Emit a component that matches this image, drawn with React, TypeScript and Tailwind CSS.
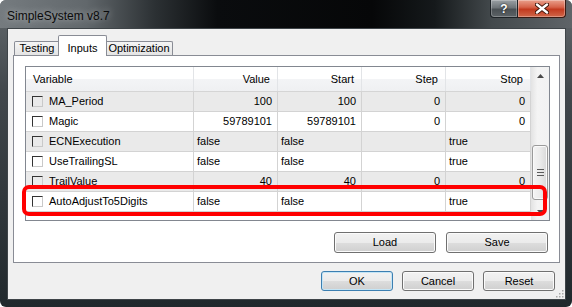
import React from 'react'

const rows = [
  { name: 'MA_Period', cells: ['100', '100', '0', '0'] },
  { name: 'Magic', cells: ['59789101', '59789101', '0', '0'] },
  { name: 'ECNExecution', cells: ['false', 'false', '', 'true'] },
  { name: 'UseTrailingSL', cells: ['false', 'false', '', 'true'] },
  { name: 'TrailValue', cells: ['40', '40', '0', '0'] },
  { name: 'AutoAdjustTo5Digits', cells: ['false', 'false', '', 'true'] },
]

const colW = ['w-[84px]', 'w-[84px]', 'w-[84px]', 'w-[85px]']

const isNum = (s: string) => /^\d+$/.test(s)

function WinButton({ label, className, focused }: { label: string; className: string; focused?: boolean }) {
  return (
    <div
      className={`${className} flex items-center justify-center rounded-[3px] border ${
        focused ? 'border-[#3c7fb1] shadow-[inset_0_0_0_1px_#c4e5f6]' : 'border-[#707070] shadow-[inset_0_0_0_1px_#fbfbfb]'
      } bg-[linear-gradient(#f2f2f2_0%,#ebebeb_50%,#dddddd_51%,#cfcfcf_100%)] text-[11px] text-black`}
    >
      {label}
    </div>
  )
}

function TitleBar() {
  return (
    <div className="h-[28px] shrink-0 flex items-start justify-between pr-[6px] bg-[linear-gradient(90deg,#757b7f_0%,#62686c_15%,#2c3134_27%,#0a0c0e_38%,#060708_65%,#15191b_76%,#43494c_86%,#5f6468_100%)]">
      <div className="pl-[7px] pt-[7px] text-[12px] text-[#0b0b0b] [text-shadow:0_0_7px_rgba(255,255,255,0.6)]">
        SimpleSystem v8.7
      </div>
      <div className="flex">
        <div className="w-[28px] h-[18px] flex items-center justify-center rounded-bl-[4px] border border-t-0 border-[#1d2226] bg-[linear-gradient(#9aa0a4_0%,#6e7478_45%,#4a5054_55%,#5c6266_100%)] shadow-[inset_0_0_0_1px_rgba(255,255,255,0.25)]">
          <span className="text-white font-bold text-[12px] leading-none [text-shadow:0_0_2px_#000]">?</span>
        </div>
        <div className="w-[48px] h-[18px] flex items-center justify-center rounded-br-[4px] border border-t-0 border-l-0 border-[#3b1a12] bg-[linear-gradient(#e9a08c_0%,#d6634a_42%,#c23a1f_55%,#d0674a_100%)] shadow-[inset_0_0_0_1px_rgba(255,255,255,0.3)]">
          <svg width="14" height="11" viewBox="0 0 14 11">
            <path d="M2 1.5 L12 9.5 M12 1.5 L2 9.5" stroke="#3a1208" strokeWidth="4.2" strokeLinecap="round" />
            <path d="M2 1.5 L12 9.5 M12 1.5 L2 9.5" stroke="#ffffff" strokeWidth="2.4" strokeLinecap="round" />
          </svg>
        </div>
      </div>
    </div>
  )
}

function Scrollbar() {
  return (
    <div className="w-[18px] shrink-0 flex flex-col bg-[linear-gradient(90deg,#e3e3e3_0%,#f4f4f4_35%,#f2f2f2_100%)]">
      <div className="h-[17px] flex items-center justify-center">
        <svg width="7" height="4" viewBox="0 0 7 4">
          <path d="M3.5 0 L7 4 L0 4 Z" fill="#4a4a4a" />
        </svg>
      </div>
      <div className="mt-[61px] mx-[1px] h-[55px] rounded-[3px] border border-[#9a9a9a] bg-[linear-gradient(90deg,#f4f4f4_0%,#ebebeb_50%,#d9d9d9_100%)] shadow-[inset_0_0_0_1px_#fafafa] flex flex-col items-center justify-center gap-[2px]">
        <div className="w-[7px] h-px bg-[#5a5a5a]" />
        <div className="w-[7px] h-px bg-[#5a5a5a]" />
        <div className="w-[7px] h-px bg-[#5a5a5a]" />
      </div>
      <div className="flex-1" />
      <div className="h-[17px] flex items-center justify-center">
        <svg width="7" height="4" viewBox="0 0 7 4">
          <path d="M0 0 L7 0 L3.5 4 Z" fill="#4a4a4a" />
        </svg>
      </div>
    </div>
  )
}

function Grid() {
  return (
    <div className="ml-[11px] mt-[10px] w-[525px] h-[155px] shrink-0 border border-[#828790] bg-white flex overflow-hidden">
      <div className="flex-1 flex flex-col">
        <div className="h-[25px] shrink-0 flex border-b border-[#d5d5d5] bg-[linear-gradient(#ffffff_0%,#ffffff_48%,#f3f4f6_52%,#eff0f2_100%)]">
          <div className="w-[168px] pl-[7px] flex items-center border-r border-[#e2e4e7]">Variable</div>
          {['Value', 'Start', 'Step', 'Stop'].map((h, i) => (
            <div key={h} className={`${colW[i]} pr-[7px] flex items-center justify-end border-r border-[#e2e4e7]`}>
              {h}
            </div>
          ))}
        </div>
        {rows.map((r, ri) => (
          <div
            key={r.name}
            className={`h-[20px] shrink-0 flex border-b border-[#d3d3d3] ${ri % 2 === 0 ? 'bg-[#eaeaea]' : 'bg-white'}`}
          >
            <div className="w-[168px] pl-[6px] flex items-center gap-[6px] border-r border-[#d3d3d3]">
              <span className="w-[11px] h-[11px] shrink-0 border border-t-[#333333] border-l-[#333333] border-r-[#c9c9c9] border-b-[#c9c9c9]" />
              <span>{r.name}</span>
            </div>
            {r.cells.map((c, i) => (
              <div
                key={i}
                className={`${colW[i]} flex items-center border-r border-[#d3d3d3] ${
                  isNum(c) ? 'justify-end pr-[5px]' : 'pl-[3px]'
                }`}
              >
                {c}
              </div>
            ))}
          </div>
        ))}
      </div>
      <Scrollbar />
    </div>
  )
}

export default function App() {
  return (
    <div className="w-[572px] h-[307px] flex flex-col overflow-hidden rounded-[6px] bg-[linear-gradient(180deg,#63696d_0%,#41474b_30%,#20282c_100%)] font-['Liberation_Sans',Arial,sans-serif] text-[11px] text-black">
      <TitleBar />
      <div className="relative flex-1 ml-[7px] mr-[6px] flex flex-col border border-[#3e4448] bg-[#f0f0f0]">
        <div className="h-[26px] shrink-0 flex items-end pl-[6px]">
          <div className="w-[46px] h-[14px] flex items-center justify-center rounded-t-[2px] border border-b-0 border-[#898c95] bg-[linear-gradient(#f5f5f5,#e4e4e4)]">
            Testing
          </div>
          <div className="relative z-10 ml-[-2px] mb-[-1px] w-[49px] h-[21px] flex justify-center pt-[4px] rounded-t-[2px] border border-b-0 border-[#898c95] bg-white">
            Inputs
          </div>
          <div className="ml-[-2px] w-[68px] h-[14px] flex items-center justify-center rounded-t-[2px] border border-b-0 border-[#898c95] bg-[linear-gradient(#f5f5f5,#e4e4e4)]">
            Optimization
          </div>
        </div>
        <div className="relative mx-[5px] h-[208px] shrink-0 flex flex-col border border-[#898c95] bg-white">
          <Grid />
          <div className="mt-[11px] flex justify-end gap-[10px] pr-[11px]">
            <WinButton label="Load" className="w-[102px] h-[21px]" />
            <WinButton label="Save" className="w-[102px] h-[21px]" />
          </div>
          <div className="absolute left-[8px] top-[129px] w-[525px] h-[31px] rounded-[7px] border-4 border-[#ff0000]" />
        </div>
        <div className="mt-[8px] flex justify-end gap-[9px] pr-[10px]">
          <WinButton label="OK" className="w-[72px] h-[20px]" focused />
          <WinButton label="Cancel" className="w-[72px] h-[20px]" />
          <WinButton label="Reset" className="w-[72px] h-[20px]" />
        </div>
        <svg className="absolute right-[1px] bottom-[1px]" width="10" height="10" viewBox="0 0 10 10">
          {[
            [8, 2],
            [8, 5],
            [5, 5],
            [8, 8],
            [5, 8],
            [2, 8],
          ].map(([x, y], i) => (
            <rect key={i} x={x} y={y} width="1.5" height="1.5" fill="#a8a8a8" />
          ))}
        </svg>
      </div>
      <div className="h-[7px] shrink-0" />
    </div>
  )
}
